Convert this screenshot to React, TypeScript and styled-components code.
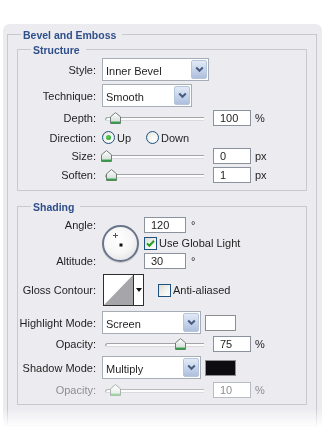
import React from "react";
import styled, { createGlobalStyle } from "styled-components";

const GlobalStyle = createGlobalStyle`
  html, body {
    margin: 0;
    padding: 0;
    background: #fff;
  }
  body {
    font-family: "Liberation Sans", Arial, sans-serif;
    font-size: 11px;
    color: #1f1f1f;
  }
`;

const Panel = styled.div`
  box-sizing: border-box;
  width: 319px;
  height: 408px;
  margin: 24px 0 0 3px;
  padding: 4px 0 0 4px;
  overflow: hidden;
  border-radius: 6px 6px 0 0;
  background: #ececf0;
  -webkit-mask-image: linear-gradient(to bottom, #000 0, #000 384px, transparent 404px);
  mask-image: linear-gradient(to bottom, #000 0, #000 384px, transparent 404px);
`;

const OuterSet = styled.fieldset`
  box-sizing: border-box;
  width: 310px;
  margin: 0;
  padding: 0 9px 20px;
  border: 1px solid #c8c8d0;
  min-inline-size: 0;
`;

const SubSet = styled.fieldset<{ $top: number; $bottom: number }>`
  box-sizing: border-box;
  width: 290px;
  margin: ${(p) => p.$top}px 0 0;
  padding: 0 0 ${(p) => p.$bottom}px;
  border: 1px solid #c8c8d0;
  min-inline-size: 0;
`;

const Legend = styled.legend<{ $indent: number }>`
  margin-left: ${(p) => p.$indent}px;
  padding: 1px 6px 0 2px;
  font-weight: bold;
  font-size: 10.5px;
  line-height: 12px;
  color: #2f4f8b;
`;

const Row = styled.div<{ $h: number; $mt?: number }>`
  display: flex;
  align-items: center;
  height: ${(p) => p.$h}px;
  margin-top: ${(p) => p.$mt ?? 0}px;
`;

const Label = styled.span<{ $dim?: boolean }>`
  flex: none;
  width: 78px;
  margin-right: 6px;
  text-align: right;
  white-space: nowrap;
  color: ${(p) => (p.$dim ? "#8e8e92" : "#1f1f1f")};
`;

const Select = styled.div<{ $w: number }>`
  box-sizing: border-box;
  display: flex;
  align-items: stretch;
  width: ${(p) => p.$w}px;
  height: 23px;
  border: 1px solid #a7adb6;
  background: #fff;
`;

const SelectText = styled.span`
  flex: 1;
  display: flex;
  align-items: center;
  padding: 2px 0 0 3px;
  font-size: 11px;
`;

const ArrowButton = styled.span`
  box-sizing: border-box;
  display: flex;
  align-items: center;
  justify-content: center;
  width: 16px;
  margin: 1px;
  border: 1px solid #b6c5de;
  border-radius: 2px;
  background: linear-gradient(to bottom, #e2eaf6 0%, #c5d3ea 55%, #aebfdc 100%);
`;

const SliderBox = styled.div`
  position: relative;
  flex: none;
  width: 102px;
  height: 14px;
`;

const Track = styled.div<{ $dim?: boolean }>`
  position: absolute;
  left: 3px;
  right: 0;
  top: 6px;
  height: 2px;
  border-top: 1px solid ${(p) => (p.$dim ? "#b9b9bd" : "#a3a3a8")};
  border-left: 1px solid ${(p) => (p.$dim ? "#b9b9bd" : "#a3a3a8")};
  border-top-left-radius: 3px;
  background: #fbfbfb;
  box-shadow: 0 1px 0 #d9d9de;
`;

const ThumbMark = styled.svg`
  position: absolute;
  top: 1px;
`;

const NumBox = styled.div<{ $w?: number; $dim?: boolean; $ml?: number }>`
  box-sizing: border-box;
  flex: none;
  width: ${(p) => p.$w ?? 38}px;
  height: 16px;
  margin-left: ${(p) => p.$ml ?? 9}px;
  padding: 1px 0 0 6px;
  border: 1px solid ${(p) => (p.$dim ? "#b7bcc4" : "#8a929e")};
  background: #fff;
  line-height: 13px;
  font-size: 11px;
  color: ${(p) => (p.$dim ? "#8e8e92" : "#1f1f1f")};
`;

const Unit = styled.span<{ $dim?: boolean }>`
  margin-left: 4px;
  color: ${(p) => (p.$dim ? "#8e8e92" : "#1f1f1f")};
`;

const Degree = styled.span`
  align-self: flex-start;
  margin: 3px 0 0 5px;
  line-height: 10px;
  font-size: 11px;
`;

const Radio = styled.span<{ $on?: boolean }>`
  box-sizing: border-box;
  display: flex;
  align-items: center;
  justify-content: center;
  width: 13px;
  height: 13px;
  border-radius: 50%;
  border: 1px solid #1c5180;
  background: radial-gradient(circle at 65% 65%, #fff 0%, #ececE7 70%, #d8d8d2 100%);
  &::after {
    content: "";
    width: 5px;
    height: 5px;
    border-radius: 50%;
    background: ${(p) => (p.$on ? "radial-gradient(circle at 40% 40%, #5fd35f, #1f9a1f)" : "transparent")};
  }
`;

const Choice = styled.label<{ $ml?: number }>`
  display: flex;
  align-items: center;
  gap: 2px;
  margin-left: ${(p) => p.$ml ?? 0}px;
`;

const Check = styled.span`
  box-sizing: border-box;
  display: flex;
  align-items: center;
  justify-content: center;
  flex: none;
  width: 13px;
  height: 13px;
  border: 1px solid #1c5180;
  background: linear-gradient(135deg, #dcdcd6 0%, #f4f4f1 60%, #fff 100%);
`;

const AngleGrid = styled.div`
  display: grid;
  grid-template-columns: 78px 36px auto;
  grid-template-rows: 16px 16px 16px;
  column-gap: 6px;
  row-gap: 2px;
  margin-top: 4px;
`;

const GridCell = styled.div<{ $row: number }>`
  grid-column: 3;
  grid-row: ${(p) => p.$row};
  display: flex;
  align-items: center;
`;

const GridLabel = styled(Label)<{ $row: number }>`
  grid-column: 1;
  grid-row: ${(p) => p.$row};
  align-self: center;
  margin-right: 0;
`;

const Dial = styled.div`
  position: relative;
  grid-column: 2;
  grid-row: 1 / 4;
  box-sizing: border-box;
  width: 37px;
  height: 37px;
  margin-top: 8px;
  border-radius: 50%;
  border: 2px solid #69758a;
  background: radial-gradient(circle at 42% 38%, #ffffff 0%, #f6f6f7 50%, #d8d8de 100%);
  box-shadow: 0 1px 1px rgba(0, 0, 0, 0.15);
`;

const Contour = styled.div`
  box-sizing: border-box;
  display: flex;
  flex: none;
  width: 41px;
  height: 32px;
  margin-left: 1px;
  border: 1px solid #2e2e2e;
  background: #fff;
`;

const ContourCaret = styled.div`
  flex: 1;
  display: flex;
  align-items: center;
  justify-content: center;
  border-left: 1px solid #2e2e2e;
  &::after {
    content: "";
    border-left: 3px solid transparent;
    border-right: 3px solid transparent;
    border-top: 4px solid #111;
  }
`;

const Swatch = styled.div<{ $color: string }>`
  box-sizing: border-box;
  flex: none;
  width: 31px;
  height: 16px;
  margin-left: 4px;
  border: 1px solid #8d8d92;
  background: ${(p) => p.$color};
`;

function Chevron() {
  return (
    <svg width="9" height="7" viewBox="0 0 9 7">
      <path d="M1.2 1.5 L4.5 4.8 L7.8 1.5" fill="none" stroke="#4a5d80" strokeWidth="2" />
    </svg>
  );
}

function Dropdown({ value, width }: { value: string; width: number }) {
  return (
    <Select $w={width}>
      <SelectText>{value}</SelectText>
      <ArrowButton>
        <Chevron />
      </ArrowButton>
    </Select>
  );
}

function Slider({ pos, dim }: { pos: number; dim?: boolean }) {
  return (
    <SliderBox>
      <Track $dim={dim} />
      <ThumbMark style={{ left: pos }} width="11" height="12" viewBox="0 0 11 12">
        <defs>
          <linearGradient id={dim ? "thumbDim" : "thumb"} x1="0" y1="0" x2="0" y2="1">
            <stop offset="0" stopColor="#ffffff" />
            <stop offset="1" stopColor={dim ? "#e4ebe6" : "#cfd8d2"} />
          </linearGradient>
        </defs>
        <path
          d="M0.5 4.8 L5.5 0.6 L10.5 4.8 V11.5 H0.5 Z"
          fill={`url(#${dim ? "thumbDim" : "thumb"})`}
          stroke={dim ? "#a9b5ad" : "#6f7f75"}
        />
        <rect x="1" y="9.6" width="9" height="1.9" fill={dim ? "#9fd6a8" : "#2f9e45"} />
      </ThumbMark>
    </SliderBox>
  );
}

function Tick() {
  return (
    <svg width="9" height="9" viewBox="0 0 9 9">
      <path d="M1 4.4 L3.4 6.8 L8 1.8" fill="none" stroke="#21a121" strokeWidth="2" />
    </svg>
  );
}

export default function App() {
  return (
    <>
      <GlobalStyle />
      <Panel>
        <OuterSet>
          <Legend $indent={4}>Bevel and Emboss</Legend>

          <SubSet $top={2} $bottom={5}>
            <Legend $indent={13}>Structure</Legend>
            <Row $h={23} $mt={2}>
              <Label>Style:</Label>
              <Dropdown value="Inner Bevel" width={107} />
            </Row>
            <Row $h={23} $mt={3}>
              <Label>Technique:</Label>
              <Dropdown value="Smooth" width={90} />
            </Row>
            <Row $h={20} $mt={1}>
              <Label>Depth:</Label>
              <Slider pos={8} />
              <NumBox>100</NumBox>
              <Unit>%</Unit>
            </Row>
            <Row $h={19}>
              <Label>Direction:</Label>
              <Choice>
                <Radio $on />
                Up
              </Choice>
              <Choice $ml={15}>
                <Radio />
                Down
              </Choice>
            </Row>
            <Row $h={18}>
              <Label>Size:</Label>
              <Slider pos={-1} />
              <NumBox>0</NumBox>
              <Unit>px</Unit>
            </Row>
            <Row $h={20}>
              <Label>Soften:</Label>
              <Slider pos={4} />
              <NumBox>1</NumBox>
              <Unit>px</Unit>
            </Row>
          </SubSet>

          <SubSet $top={9} $bottom={3}>
            <Legend $indent={13}>Shading</Legend>
            <AngleGrid>
              <GridLabel $row={1}>Angle:</GridLabel>
              <Dial>
                <svg width="33" height="33" viewBox="0 0 33 33" style={{ position: "absolute", left: 0, top: 0 }}>
                  <path d="M11.5 6 V11 M9 8.5 H14" stroke="#555" strokeWidth="1" />
                  <rect x="15.5" y="16.5" width="3" height="3" fill="#111" />
                </svg>
              </Dial>
              <GridCell $row={1}>
                <NumBox $w={42} $ml={0}>120</NumBox>
                <Degree>°</Degree>
              </GridCell>
              <GridCell $row={2}>
                <Choice>
                  <Check>
                    <Tick />
                  </Check>
                  Use Global Light
                </Choice>
              </GridCell>
              <GridLabel $row={3}>Altitude:</GridLabel>
              <GridCell $row={3}>
                <NumBox $w={42} $ml={0}>30</NumBox>
                <Degree>°</Degree>
              </GridCell>
            </AngleGrid>

            <Row $h={32} $mt={5}>
              <Label>Gloss Contour:</Label>
              <Contour>
                <svg width="29" height="30" viewBox="0 0 29 30">
                  <polygon points="0,30 29,0 29,30" fill="#a6a6aa" />
                </svg>
                <ContourCaret />
              </Contour>
              <Choice $ml={14}>
                <Check />
                Anti-aliased
              </Choice>
            </Row>
            <Row $h={23} $mt={5}>
              <Label>Highlight Mode:</Label>
              <Dropdown value="Screen" width={99} />
              <Swatch $color="#ffffff" />
            </Row>
            <Row $h={20}>
              <Label>Opacity:</Label>
              <Slider pos={73} />
              <NumBox>75</NumBox>
              <Unit>%</Unit>
            </Row>
            <Row $h={23} $mt={2}>
              <Label>Shadow Mode:</Label>
              <Dropdown value="Multiply" width={99} />
              <Swatch $color="#0d0d0f" />
            </Row>
            <Row $h={22}>
              <Label $dim>Opacity:</Label>
              <Slider pos={8} dim />
              <NumBox $dim>10</NumBox>
              <Unit $dim>%</Unit>
            </Row>
          </SubSet>
        </OuterSet>
      </Panel>
    </>
  );
}
